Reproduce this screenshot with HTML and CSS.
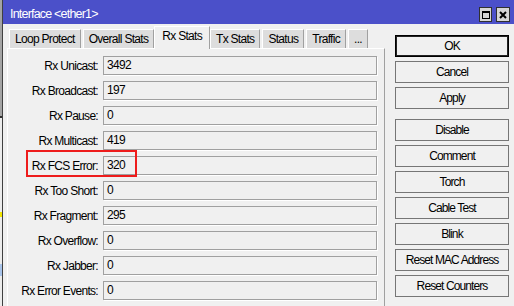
FILE: index.html
```
<!DOCTYPE html>
<html lang="en">
<head>
  <meta charset="UTF-8">
  <title>Interface &lt;ether1&gt;</title>
  <link rel="stylesheet" href="styles.css">
</head>
<body>
  <div class="behind">
    <div class="behind-top"></div>
    <div class="behind-rest">
      <span class="bit-yellow"></span>
      <span class="bit-blue"></span>
    </div>
  </div>

  <div class="window">
    <div class="titlebar">
      <span class="title">Interface &lt;ether1&gt;</span>
      <div class="title-buttons">
        <span class="tbtn">
          <svg width="10" height="10" viewBox="0 0 10 10"><rect x="1.5" y="1.5" width="7" height="7" fill="none" stroke="#000" stroke-width="1"/><rect x="1" y="1" width="8" height="2" fill="#000"/></svg>
        </span>
        <span class="tbtn">
          <svg width="10" height="10" viewBox="0 0 10 10"><path d="M2 2 L8 8 M8 2 L2 8" stroke="#000" stroke-width="2"/></svg>
        </span>
      </div>
    </div>

    <div class="content">
      <div class="left">
        <div class="tabs">
          <span class="tab">Loop Protect</span>
          <span class="tab">Overall Stats</span>
          <span class="tab active">Rx Stats</span>
          <span class="tab">Tx Stats</span>
          <span class="tab">Status</span>
          <span class="tab">Traffic</span>
          <span class="tab more">...</span>
        </div>
        <div class="panel">
          <div class="row"><label>Rx Unicast:</label><div class="field">3492</div></div>
          <div class="row"><label>Rx Broadcast:</label><div class="field">197</div></div>
          <div class="row"><label>Rx Pause:</label><div class="field">0</div></div>
          <div class="row"><label>Rx Multicast:</label><div class="field">419</div></div>
          <div class="row"><label>Rx FCS Error:</label><div class="field">320</div></div>
          <div class="row"><label>Rx Too Short:</label><div class="field">0</div></div>
          <div class="row"><label>Rx Fragment:</label><div class="field">295</div></div>
          <div class="row"><label>Rx Overflow:</label><div class="field">0</div></div>
          <div class="row"><label>Rx Jabber:</label><div class="field">0</div></div>
          <div class="row"><label>Rx Error Events:</label><div class="field">0</div></div>
        </div>
      </div>

      <div class="buttons">
        <button class="default">OK</button>
        <button>Cancel</button>
        <button class="group-end">Apply</button>
        <button>Disable</button>
        <button>Comment</button>
        <button>Torch</button>
        <button>Cable Test</button>
        <button>Blink</button>
        <button>Reset MAC Address</button>
        <button>Reset Counters</button>
      </div>
    </div>
  </div>

  <!-- highlight drawn over the screenshot -->
  <div class="mark"></div>
</body>
</html>
```
FILE: styles.css
```
html, body {
  margin: 0;
  padding: 0;
  overflow: hidden;
}

body {
  font-family: "Liberation Sans", Arial, sans-serif;
  font-size: 12px;
  letter-spacing: -0.7px;
  color: #000;
  background-color: #f0f0f0;
  display: flex;
  height: 306px;
  position: relative;
}

/* strip of the window lying behind */
.behind {
  width: 2px;
  display: flex;
  flex-direction: column;
}

.behind-top {
  height: 116px;
  background-color: #a4a4a4;
  border-bottom: 2px solid #303030;
}

.behind-rest {
  flex: 1;
  background-color: #ececec;
  display: flex;
  flex-direction: column;
}

.bit-yellow {
  margin-top: 94px;
  height: 5px;
  background-color: #f2e600;
}

.bit-blue {
  margin-top: 47px;
  height: 12px;
  background-color: #a9c4ea;
}

.window {
  flex: 1;
  border-left: 1px solid #404040;
  display: flex;
  flex-direction: column;
  background-color: #f0f0f0;
}

.titlebar {
  height: 24px;
  background-color: #4b50c9;
  color: white;
  display: flex;
  align-items: flex-start;
  padding-left: 7px;
}

.title {
  margin-top: 6px;
  line-height: 16px;
  font-size: 12.5px;
  letter-spacing: -0.8px;
}

.title-buttons {
  margin-left: auto;
  margin-right: 4px;
  margin-top: 7px;
  display: flex;
  gap: 4px;
}

.tbtn {
  width: 11px;
  height: 13px;
  background-color: #d6d6d6;
  border: 1px solid #303030;
  display: flex;
  align-items: center;
  justify-content: center;
}

.tbtn:last-child {
  width: 12px;
}

.content {
  display: flex;
  align-items: flex-start;
  flex: 1;
}

.left {
  margin-left: 4px;
  width: 378px;
  display: flex;
  flex-direction: column;
  height: 282px;
  overflow: hidden;
}

.tabs {
  display: flex;
  align-items: flex-end;
  height: 24px;
  padding-left: 2px;
}

.tab {
  height: 18px;
  line-height: 19px;
  padding: 0 5px;
  margin-right: 2px;
  background-color: #dddddd;
  border-top: 1px solid #fff;
  border-left: 1px solid #fff;
  border-right: 1px solid #a0a0a0;
  white-space: nowrap;
}

.tab.more {
  padding: 0 5px;
}

.tab.active {
  height: 22px;
  line-height: 19px;
  margin-left: -2px;
  margin-right: 0;
  margin-bottom: -1px;
  padding: 0 7px;
  background-color: #f0f0f0;
  position: relative;
}

.panel {
  flex: 1;
  border-top: 1px solid #fff;
  border-left: 1px solid #fff;
  border-right: 1px solid #a0a0a0;
  padding-top: 7px;
}

.row {
  display: flex;
  align-items: center;
  height: 19px;
  margin-bottom: 6px;
}

.row label {
  width: 90px;
  text-align: right;
  margin-right: 5px;
  white-space: nowrap;
}

.field {
  width: 274px;
  height: 19px;
  box-sizing: border-box;
  border: 1px solid #a0a0a0;
  box-shadow: 1px 1px 0 #fff;
  padding-left: 3px;
  line-height: 17px;
}

.buttons {
  margin-left: 10px;
  width: 114px;
  padding-top: 11px;
  display: flex;
  flex-direction: column;
  gap: 4px;
}

button {
  font-family: inherit;
  font-size: 12px;
  letter-spacing: -0.9px;
  color: #000;
  height: 22px;
  padding: 0;
  background-color: #f0f0f0;
  border: 1px solid #767676;
  border-radius: 0;
  white-space: nowrap;
}

button.default {
  border-color: #000;
  box-shadow: inset 0 0 0 1px #222;
}

button.group-end {
  margin-bottom: 6px;
}

.mark {
  position: absolute;
  left: 26px;
  top: 150px;
  width: 111px;
  height: 27px;
  box-sizing: border-box;
  border: 2px solid #ee1c1c;
}
```
